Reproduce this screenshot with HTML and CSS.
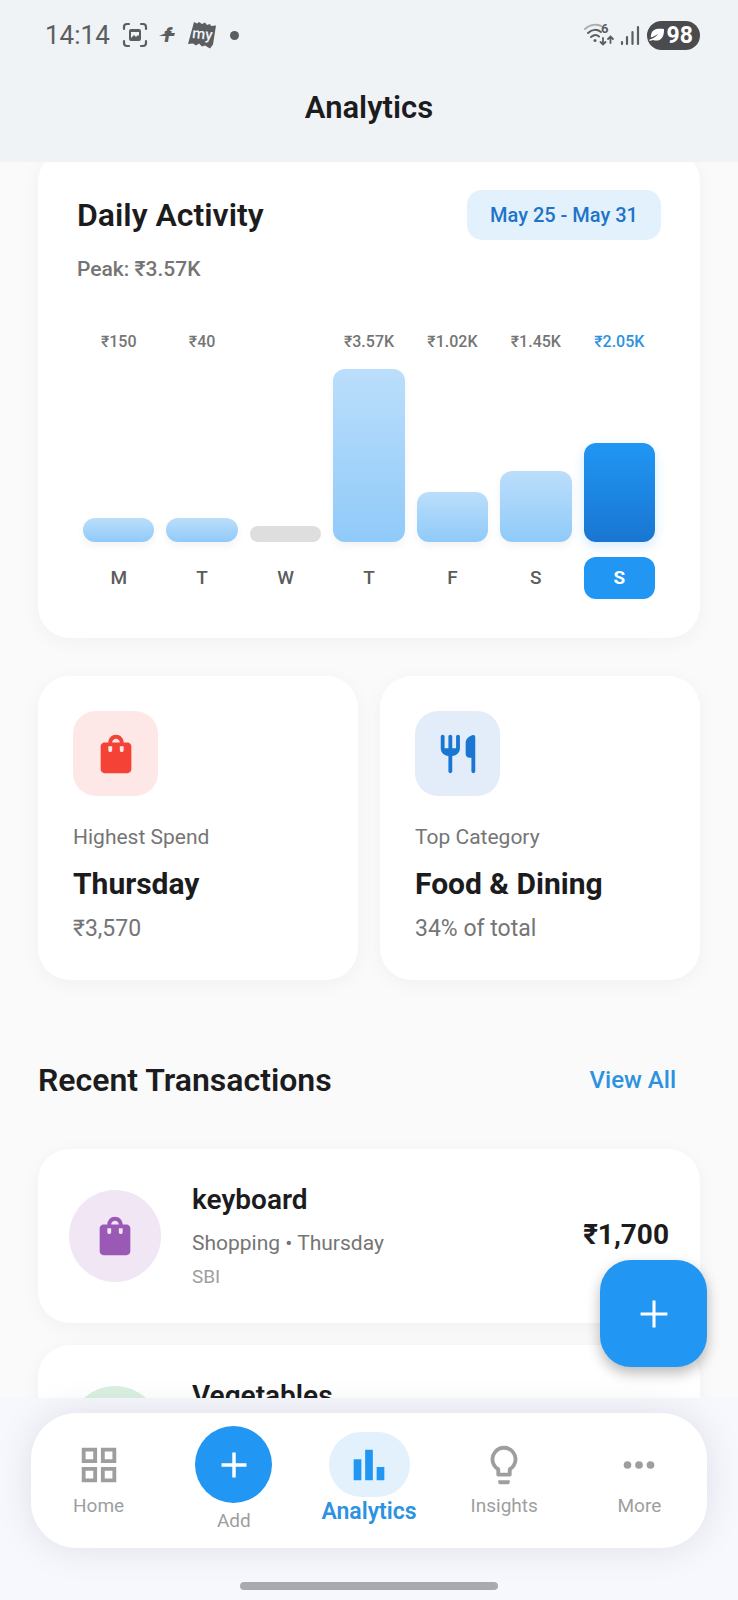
FILE: index.html
```html
<!DOCTYPE html>
<html lang="en">
<head>
  <meta charset="UTF-8" />
  <meta name="viewport" content="width=device-width, initial-scale=1" />
  <title>Analytics</title>
  <link rel="stylesheet" href="styles.css">
</head>
<body>

  <header class="top">
    <div class="status">
      <span class="time">14:14</span>
      <svg width="26" height="26" viewBox="0 0 26 26" fill="none" stroke="currentColor" stroke-width="2.2" stroke-linecap="round">
        <path d="M2 7V5a3 3 0 0 1 3-3h2M19 2h2a3 3 0 0 1 3 3v2M24 19v2a3 3 0 0 1-3 3h-2M7 24H5a3 3 0 0 1-3-3v-2" />
        <path d="M9 7h8a2 2 0 0 1 2 2v8a2 2 0 0 1-2 2H9a2 2 0 0 1-2-2V9a2 2 0 0 1 2-2zm0 3v6l3-3 2 2 2-2 1 1v-4z" fill="currentColor" fill-rule="evenodd" stroke="none" />
      </svg>
      <svg width="20" height="24" viewBox="0 0 20 24" fill="currentColor">
        <text class="logo-f" x="6" y="19">f</text>
        <path d="M1 13L8 10h9l-1 3z" />
      </svg>
      <svg width="28" height="28" viewBox="0 0 28 28">
        <path d="M6 1l3 1.500L11 1l3 2 3-1.500 2 2.500 3-1 1 2 5-.5-3 19-3 4-5-3-3 1-3-3-3 2-3-2-5 .5z" fill="currentColor" />
        <text class="logo-my" x="4" y="18" transform="rotate(6 14 14)">my</text>
      </svg>
      <span class="dot"></span>

      <div class="status-right">
        <svg width="32" height="26" viewBox="0 0 32 26" fill="none" stroke="currentColor" stroke-width="2" stroke-linecap="round">
          <path d="M2 7c5-5 12-5 16-3" opacity=".45" />
          <path d="M5 11c4-4 9-4 13-1M8 15c3-2.500 6-2.500 8-.5" />
          <circle cx="12" cy="18.500" r="1.500" fill="currentColor" stroke="none" />
          <path d="M20 16v6M17.500 20l2.500 2.500 2.500-2.500M27.500 21v-6M25 17l2.500-2.500L30 17" stroke-width="1.800" />
          <text class="wifi-gen" x="18" y="11">6</text>
        </svg>
        <svg width="20" height="22" viewBox="0 0 20 22" fill="none" stroke="currentColor" stroke-width="2.200" stroke-linecap="round">
          <path d="M2 18v2M7 13v7M12.500 8v12M18 3v17" />
        </svg>
        <span class="battery">
          <svg width="16" height="16" viewBox="0 0 16 16">
            <path d="M15 2C8 1 3 2 2 8l-.2 2.500C4 10 6 9 9 7c-2 3-5 4.500-8.500 5.500v1.500L4 13c6 2 11.500-1 11-11z" fill="currentColor" />
          </svg>
          98
        </span>
      </div>
    </div>
    <h1>Analytics</h1>
  </header>

  <main>
    <div class="content">

      <section class="card activity">
        <div class="activity-head">
          <h2>Daily Activity</h2>
          <button class="range" type="button">May 25 - May 31</button>
        </div>
        <p class="peak">Peak: ₹3.57K</p>
        <ul class="chart">
          <li><span class="amount">₹150</span><div class="track"><div class="bar" style="height: 14%"></div></div><span class="day">M</span></li>
          <li><span class="amount">₹40</span><div class="track"><div class="bar" style="height: 14%"></div></div><span class="day">T</span></li>
          <li><span class="amount"></span><div class="track"><div class="bar empty" style="height: 9%"></div></div><span class="day">W</span></li>
          <li><span class="amount">₹3.57K</span><div class="track"><div class="bar" style="height: 100%"></div></div><span class="day">T</span></li>
          <li><span class="amount">₹1.02K</span><div class="track"><div class="bar" style="height: 29%"></div></div><span class="day">F</span></li>
          <li><span class="amount">₹1.45K</span><div class="track"><div class="bar" style="height: 41%"></div></div><span class="day">S</span></li>
          <li class="today"><span class="amount">₹2.05K</span><div class="track"><div class="bar" style="height: 57%"></div></div><span class="day">S</span></li>
        </ul>
      </section>

      <div class="stats">
        <section class="card stat">
          <div class="stat-icon red">
            <svg class="icon" viewBox="0 0 24 24"><path d="M18 6h-2c0-2.210-1.790-4-4-4S8 3.790 8 6H6c-1.100 0-2 .9-2 2v12c0 1.100.9 2 2 2h12c1.100 0 2-.9 2-2V8c0-1.100-.9-2-2-2zm-8 4c0 .55-.45 1-1 1s-1-.45-1-1V8h2v2zm2-6c1.100 0 2 .9 2 2h-4c0-1.100.9-2 2-2zm4 6c0 .55-.45 1-1 1s-1-.45-1-1V8h2v2z" /></svg>
          </div>
          <p class="stat-label">Highest Spend</p>
          <h3>Thursday</h3>
          <p class="stat-note">₹3,570</p>
        </section>
        <section class="card stat">
          <div class="stat-icon blue">
            <svg class="icon" viewBox="0 0 24 24"><path d="M16 6v6c0 1.100.9 2 2 2h1v7c0 .55.45 1 1 1s1-.45 1-1V3.130c0-.65-.61-1.130-1.240-.98C17.600 2.680 16 4.510 16 6zm-5 3H9V3c0-.55-.45-1-1-1s-1 .45-1 1v6H5V3c0-.55-.45-1-1-1s-1 .45-1 1v6c0 2.210 1.790 4 4 4v8c0 .55.45 1 1 1s1-.45 1-1v-8c2.210 0 4-1.790 4-4V3c0-.55-.45-1-1-1s-1 .45-1 1v6z" /></svg>
          </div>
          <p class="stat-label">Top Category</p>
          <h3>Food &amp; Dining</h3>
          <p class="stat-note">34% of total</p>
        </section>
      </div>

      <div class="section-head">
        <h2>Recent Transactions</h2>
        <a href="#">View All</a>
      </div>

      <article class="card transaction">
        <div class="avatar purple">
          <svg class="icon" viewBox="0 0 24 24"><path d="M18 6h-2c0-2.210-1.790-4-4-4S8 3.790 8 6H6c-1.100 0-2 .9-2 2v12c0 1.100.9 2 2 2h12c1.100 0 2-.9 2-2V8c0-1.100-.9-2-2-2zm-8 4c0 .55-.45 1-1 1s-1-.45-1-1V8h2v2zm2-6c1.100 0 2 .9 2 2h-4c0-1.100.9-2 2-2zm4 6c0 .55-.45 1-1 1s-1-.45-1-1V8h2v2z" /></svg>
        </div>
        <div class="info">
          <h3>keyboard</h3>
          <p class="meta">Shopping • Thursday</p>
          <p class="bank">SBI</p>
        </div>
        <span class="price">₹1,700</span>
      </article>

      <article class="card transaction">
        <div class="avatar green"></div>
        <div class="info">
          <h3>Vegetables</h3>
        </div>
      </article>

    </div>
  </main>

  <footer>
    <button class="fab" type="button" aria-label="Add transaction">
      <svg class="icon" viewBox="0 0 24 24"><path d="M19 12.800h-6.200V19h-1.600v-6.200H5v-1.600h6.200V5h1.600v6.200H19z" /></svg>
    </button>
    <nav>
      <a href="#">
        <svg class="icon" viewBox="0 0 24 24"><path d="M3 3v8h8V3H3zm6 6H5V5h4v4zm-6 4v8h8v-8H3zm6 6H5v-4h4v4zm4-16v8h8V3h-8zm6 6h-4V5h4v4zm-6 4v8h8v-8h-8zm6 6h-4v-4h4v4z" /></svg>
        <span>Home</span>
      </a>
      <a href="#">
        <span class="add"><svg class="icon" viewBox="0 0 24 24"><path d="M18.500 12.900h-5.600v5.600h-1.800v-5.600H5.500v-1.800h5.600V5.500h1.800v5.600h5.600z" /></svg></span>
        <span>Add</span>
      </a>
      <a href="#" class="active">
        <span class="pill"><svg class="icon" viewBox="0 0 24 24"><path d="M4 9h4v11H4zm12 4h4v7h-4zm-6-9h4v16h-4z" /></svg></span>
        <span>Analytics</span>
      </a>
      <a href="#">
        <svg class="icon" viewBox="0 0 24 24"><path d="M9 17v-2.800a6 6 0 1 1 6 0V17z" fill="none" stroke="currentColor" stroke-width="2" stroke-linejoin="round" /><path d="M9 20h6v1c0 .6-.4 1-1 1h-4c-.6 0-1-.4-1-1z" /></svg>
        <span>Insights</span>
      </a>
      <a href="#">
        <svg class="icon" viewBox="0 0 24 24"><circle cx="6" cy="12" r="2" /><circle cx="12" cy="12" r="2" /><circle cx="18" cy="12" r="2" /></svg>
        <span>More</span>
      </a>
    </nav>
    <div class="handle"></div>
  </footer>

</body>
</html>
```
FILE: styles.css
```css
* {
  box-sizing: border-box;
}
body {
  display: flex;
  flex-direction: column;
  height: 100vh;
  margin: 0;
  background-color: #fafafa;
  color: #1c1c1e;
  font-family: Roboto, "Liberation Sans", sans-serif;
}
h1, h2, h3, p, ul {
  margin: 0;
  padding: 0;
}
a {
  text-decoration: none;
}
button {
  border: none;
  font-family: inherit;
  cursor: pointer;
}
.icon {
  display: block;
  width: 46px;
  height: 46px;
  fill: currentColor;
}

/* header */
.top {
  flex: none;
  height: 162px;
  background-color: #eff3f6;
}
.status {
  display: flex;
  align-items: center;
  height: 70px;
  padding: 0 38px 0 45px;
  gap: 10px;
  color: #5c5d60;
}
.time {
  margin-right: 2px;
  font-size: 26px;
}
.logo-f {
  font-size: 20px;
  font-style: italic;
  font-weight: 900;
}
.logo-my {
  font-size: 15px;
  font-weight: 500;
  fill: #eff3f6;
}
.dot {
  width: 9px;
  height: 9px;
  margin-left: 4px;
  border-radius: 50%;
  background-color: currentColor;
}
.status-right {
  display: flex;
  align-items: center;
  gap: 5px;
  margin-left: auto;
}
.wifi-gen {
  font-size: 13px;
  font-weight: 700;
  fill: currentColor;
  stroke: none;
}
.battery {
  display: flex;
  align-items: center;
  height: 29px;
  margin-left: 2px;
  padding: 0 7px 0 2px;
  gap: 2px;
  border-radius: 15px;
  background-color: #4b4b4e;
  color: #fff;
  font-size: 23px;
  font-weight: 700;
}
h1 {
  font-size: 31px;
  font-weight: 600;
  line-height: 76px;
  text-align: center;
}

/* scrolling content */
main {
  flex: 1;
  min-height: 0;
  overflow: hidden;
}
.content {
  margin-top: -12px;
  padding: 0 38px;
}
.card {
  border-radius: 32px;
  background-color: #fff;
  box-shadow: 0 4px 20px rgba(0, 0, 0, 0.04);
}
h2 {
  font-size: 32px;
  font-weight: 600;
  line-height: 40px;
}

.activity {
  padding: 40px 39px 39px;
}
.activity-head {
  display: flex;
  align-items: center;
  justify-content: space-between;
}
.range {
  height: 50px;
  padding: 0 23px;
  border-radius: 15px;
  background-color: #e3f1fd;
  color: #1f74c8;
  font-size: 20px;
  font-weight: 500;
}
.peak {
  margin-top: 17px;
  color: #757575;
  font-size: 21px;
  font-weight: 500;
  line-height: 24px;
}
.chart {
  display: grid;
  grid-template-columns: repeat(7, 1fr);
  gap: 12px;
  margin-top: 51px;
  padding: 0 6px;
  list-style: none;
}
.chart li {
  display: flex;
  flex-direction: column;
  text-align: center;
}
.amount {
  height: 20px;
  color: #757575;
  font-size: 16px;
  font-weight: 500;
  line-height: 20px;
}
.track {
  display: flex;
  align-items: flex-end;
  height: 173px;
  margin: 17px 0 15px;
}
.bar {
  width: 100%;
  border-radius: 12px;
  background: linear-gradient(#bbdefb, #90caf9);
  box-shadow: 0 4px 8px rgba(0, 0, 0, 0.05);
}
.bar.empty {
  background: #dedede;
  box-shadow: none;
}
.day {
  border-radius: 12px;
  color: #5c5c5c;
  font-size: 19px;
  font-weight: 500;
  line-height: 42px;
}
.today .amount {
  color: #2d92df;
}
.today .bar {
  background: linear-gradient(#2196f3, #1976d2);
  box-shadow: 0 4px 12px rgba(33, 150, 243, 0.2);
}
.today .day {
  background-color: #2196f3;
  color: #fff;
  font-weight: 700;
}

.stats {
  display: grid;
  grid-template-columns: 1fr 1fr;
  gap: 22px;
  margin-top: 38px;
}
.stat {
  padding: 35px 35px 38px;
}
.stat-icon {
  display: flex;
  align-items: center;
  justify-content: center;
  width: 85px;
  height: 85px;
  border-radius: 23px;
}
.red {
  background-color: #fde8e7;
  color: #f44336;
}
.blue {
  background-color: #e3edf9;
  color: #1976d2;
}
.stat-label {
  margin-top: 27px;
  color: #757575;
  font-size: 21px;
  line-height: 28px;
}
.stat h3 {
  margin: 13px 0 12px;
  font-size: 30px;
  font-weight: 700;
  line-height: 40px;
}
.stat-note {
  color: #757575;
  font-size: 23px;
  line-height: 26px;
}

.section-head {
  display: flex;
  align-items: center;
  justify-content: space-between;
  margin: 80px 0 49px;
}
.section-head a {
  padding: 0 24px;
  color: #2d92df;
  font-size: 24px;
  font-weight: 500;
}

.transaction {
  display: flex;
  align-items: center;
  min-height: 174px;
  margin-bottom: 22px;
  padding: 33px 31px;
  gap: 31px;
}
.avatar {
  display: flex;
  align-items: center;
  justify-content: center;
  width: 92px;
  height: 92px;
  border-radius: 50%;
}
.purple {
  background-color: #f0e6f4;
  color: #9b59b6;
}
.green {
  background-color: #d9f0e0;
}
.info {
  flex: 1;
  align-self: flex-start;
}
.info h3 {
  font-size: 28px;
  font-weight: 600;
  line-height: 36px;
}
.meta {
  margin: 11px 0 8px;
  color: #757575;
  font-size: 21px;
  line-height: 28px;
}
.bank {
  color: #9e9e9e;
  font-size: 19px;
  line-height: 24px;
}
.price {
  padding-bottom: 4px;
  font-size: 28px;
  font-weight: 700;
}

/* bottom bar */
footer {
  position: relative;
  flex: none;
  padding: 15px 31px 10px;
  background-color: #f7f8fd;
}
.fab {
  position: absolute;
  right: 31px;
  bottom: 100%;
  z-index: 1;
  display: flex;
  align-items: center;
  justify-content: center;
  width: 107px;
  height: 107px;
  margin-bottom: 31px;
  border-radius: 31px;
  background-color: #2196f3;
  color: #fff;
  box-shadow: 0 6px 14px rgba(0, 0, 0, 0.28);
}
nav {
  display: flex;
  height: 135px;
  padding-bottom: 2px;
  border-radius: 46px;
  background-color: #fff;
  box-shadow: 0 0 38px rgba(20, 20, 60, 0.1);
}
nav a {
  display: flex;
  flex: 1;
  flex-direction: column;
  align-items: center;
  justify-content: center;
  gap: 6px;
  color: #9e9e9e;
  font-size: 19px;
  line-height: 24px;
}
.add, .pill {
  display: flex;
  align-items: center;
  justify-content: center;
}
.add {
  width: 77px;
  height: 77px;
  border-radius: 50%;
  background-color: #2196f3;
  color: #fff;
}
.pill {
  width: 81px;
  height: 65px;
  border-radius: 33px;
  background-color: #e3f1fd;
  color: #2196f3;
}
nav .active {
  gap: 0;
  color: #2d92df;
  font-size: 23px;
  font-weight: 600;
  line-height: 30px;
}
.handle {
  width: 258px;
  height: 8px;
  margin: 34px auto 0;
  border-radius: 4px;
  background-color: #a9aab0;
}
```
